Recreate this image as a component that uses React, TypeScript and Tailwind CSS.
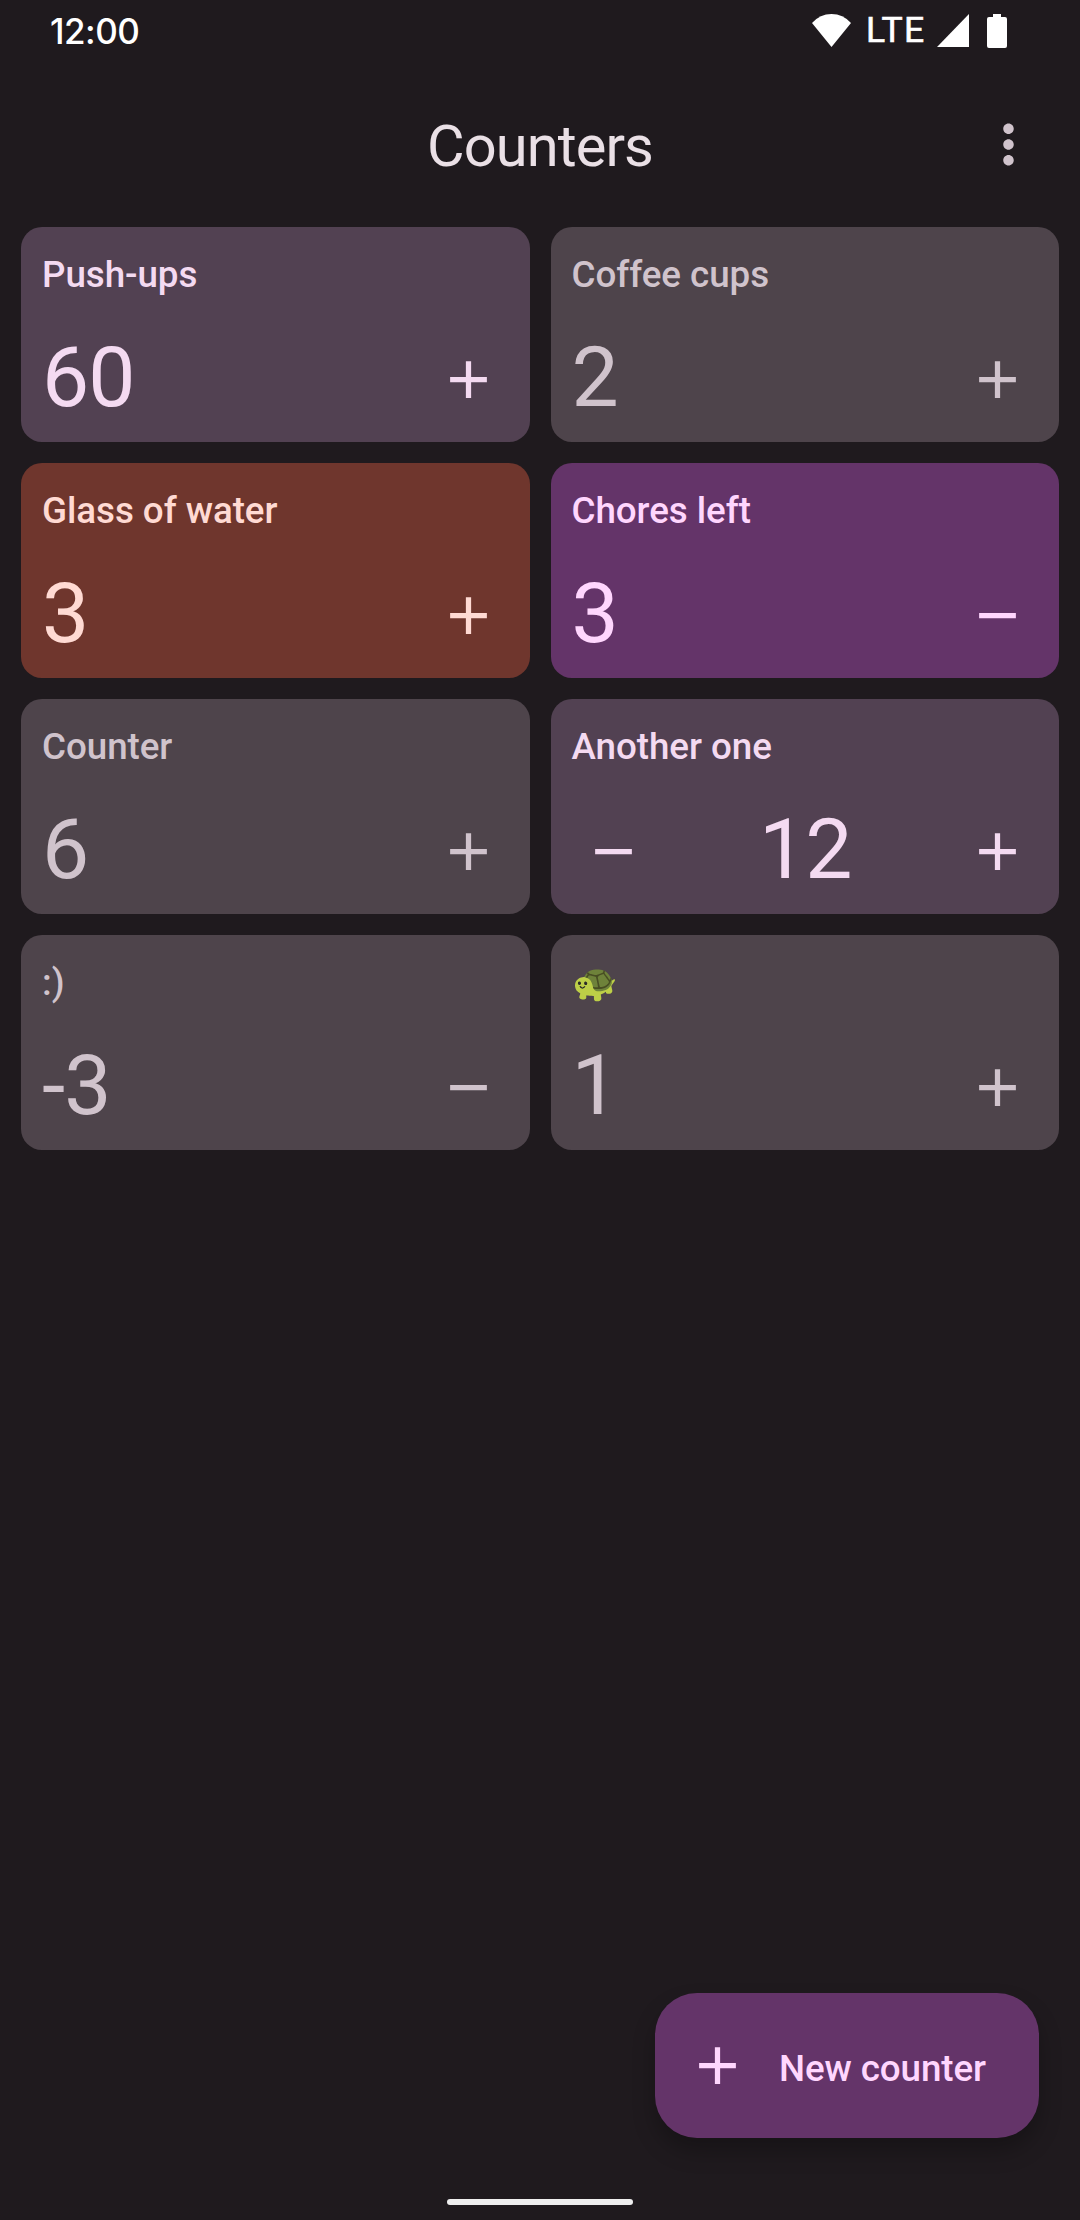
import React from "react";

type Tone = "purple" | "gray" | "red" | "violet";
type Counter = { name: string; value: string; tone: Tone; minus?: boolean; plus?: boolean };

const tones: Record<Tone, string> = {
  purple: "bg-[#524152] text-[#f4daf1]",
  gray: "bg-[#4e444b] text-[#d0c3cc]",
  red: "bg-[#6f362d] text-[#ffdad3]",
  violet: "bg-[#643469] text-[#ffd6fe]",
};

const counters: Counter[] = [
  { name: "Push-ups", value: "60", tone: "purple", plus: true },
  { name: "Coffee cups", value: "2", tone: "gray", plus: true },
  { name: "Glass of water", value: "3", tone: "red", plus: true },
  { name: "Chores left", value: "3", tone: "violet", minus: true },
  { name: "Counter", value: "6", tone: "gray", plus: true },
  { name: "Another one", value: "12", tone: "purple", minus: true, plus: true },
  { name: ":)", value: "-3", tone: "gray", minus: true },
  { name: "🐢", value: "1", tone: "gray", plus: true },
];

function Plus() {
  return (
    <svg viewBox="0 0 24 24" className="size-[63px] shrink-0" fill="currentColor">
      <path d="M19 13h-6v6h-2v-6H5v-2h6V5h2v6h6z" />
    </svg>
  );
}

function Minus() {
  return (
    <svg viewBox="0 0 24 24" className="size-[63px] shrink-0" fill="currentColor">
      <path d="M5 11h14v2H5z" />
    </svg>
  );
}

function Card({ name, value, tone, minus, plus }: Counter) {
  const both = minus && plus;
  return (
    <div className={`flex h-[215px] flex-col rounded-[21px] px-[21px] pt-[21px] ${tones[tone]}`}>
      <div className="h-[53px] text-[36.75px] leading-[53px] font-medium tracking-[-0.05px]">{name}</div>
      <div className="mt-[26px] flex h-[105px] items-center justify-between pr-[9px]">
        {both && <div className="ml-[10px] flex"><Minus /></div>}
        <span className="pb-[4px] text-[84px] leading-[98px] tracking-[-1px]">{value}</span>
        {plus ? <Plus /> : <Minus />}
      </div>
    </div>
  );
}

export default function App() {
  return (
    <div className="flex h-[2220px] w-[1080px] flex-col bg-[#1f1a1e] font-[Roboto,sans-serif]">
      <div className="flex h-[63px] items-start justify-between pr-[73px] pl-[50px] text-white">
        <span className="pt-[9px] font-[Inter,sans-serif] text-[35px] leading-[44px] font-medium tracking-[-0.5px]">12:00</span>
        <div className="flex items-start">
          <svg viewBox="0 0 39 33" className="mt-[14px] h-[33px] w-[39px]" fill="currentColor">
            <path d="M0 9Q8 0 19.5 0T39 9L19.5 33z" />
          </svg>
          <span className="ml-[15px] w-[71px] pt-[8px] text-[35.5px] leading-[44px] tracking-[1.2px] [-webkit-text-stroke:0.6px_white]">LTE</span>
          <svg viewBox="0 0 32 33" className="mt-[14px] h-[33px] w-[32px]" fill="currentColor">
            <path d="M0 33L32 0V33z" />
          </svg>
          <svg viewBox="0 0 20 34" className="mt-[14px] ml-[18px] h-[34px] w-[20px]" fill="currentColor">
            <path d="M6 0h8v3h4q2 0 2 2v27q0 2-2 2H2q-2 0-2-2V5q0-2 2-2h4z" />
          </svg>
        </div>
      </div>
      <header className="grid h-[164px] grid-cols-[1fr_auto_1fr] items-center pr-[40px] pb-[2px] pl-[40px] text-[#eae0e6]">
        <div />
        <h1 className="pt-[4px] text-[57.75px] leading-[74px] tracking-[-0.9px]">Counters</h1>
        <svg viewBox="0 0 24 24" className="size-[63px] justify-self-end text-[#d0c3cc]" fill="currentColor">
          <path d="M12 8c1.1 0 2-.9 2-2s-.9-2-2-2-2 .9-2 2 .9 2 2 2zm0 2c-1.1 0-2 .9-2 2s.9 2 2 2 2-.9 2-2-.9-2-2-2zm0 6c-1.1 0-2 .9-2 2s.9 2 2 2 2-.9 2-2-.9-2-2-2z" />
        </svg>
      </header>
      <main className="grid grid-cols-2 gap-[21px] px-[21px]">
        {counters.map((c) => (
          <Card key={c.name} {...c} />
        ))}
      </main>
      <button className="mt-auto mr-[41px] flex h-[145px] w-[384px] items-center self-end rounded-[42px] bg-[#643469] pl-[30.5px] text-[#ffd6fe] shadow-[0_13px_22px_rgba(0,0,0,0.26)]">
        <Plus />
        <span className="ml-[30.5px] pt-[5px] text-[36.75px] leading-[53px] font-medium tracking-[-0.1px]">New counter</span>
      </button>
      <div className="mt-[61px] mb-[15px] h-[6px] w-[186px] self-center rounded-full bg-[#eeeeee]" />
    </div>
  );
}
